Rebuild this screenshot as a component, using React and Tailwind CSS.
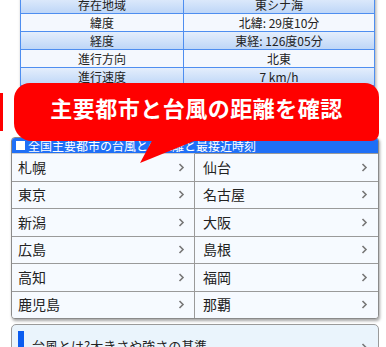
import React from 'react';

const rows = [
  ['存在地域', '東シナ海'],
  ['緯度', '北緯: 29度10分'],
  ['経度', '東経: 126度05分'],
  ['進行方向', '北東'],
  ['進行速度', '7 km/h'],
  ['中心気圧', '985 hPa'],
  ['最大風速', '25 m/s'],
];

const cities = [
  ['札幌', '仙台'],
  ['東京', '名古屋'],
  ['新潟', '大阪'],
  ['広島', '島根'],
  ['高知', '福岡'],
  ['鹿児島', '那覇'],
];

const Chevron = () => (
  <svg width="7" height="9" viewBox="0 0 7 9" className="shrink-0">
    <path d="M1.5 1 L5 4.5 L1.5 8" fill="none" stroke="#777" strokeWidth="1.6" />
  </svg>
);

const App = () => {
  return (
    <div className="relative w-[386px] h-[347px] overflow-hidden bg-white" style={{ fontFamily: '"Noto Sans CJK JP", "Noto Sans", sans-serif' }}>
      {/* red edge of the element on the left */}
      <div className="absolute left-0 top-[93px] w-[3px] h-[38px] bg-[#ff0000]"></div>

      {/* typhoon info table */}
      <div className="ml-[20px] mt-[-5px] w-[355px] shadow-[1px_1px_3px_rgba(0,0,0,0.35)]">
        <table className="w-full border-collapse text-[12px] leading-none text-[#222]">
          <tbody>
            {rows.map(([a, b], i) => (
              <tr key={a} className={i % 2 === 0 ? 'bg-gradient-to-b from-[#e4eefc] to-[#bcd5f7]' : 'bg-[#f4f8fe]'}>
                <td className="h-[18px] w-[163px] border border-[#4e8ef0] text-center">{a}</td>
                <td className="h-[18px] border border-[#4e8ef0] text-center">{b}</td>
              </tr>
            ))}
          </tbody>
        </table>
      </div>

      {/* cities panel */}
      <div className="mt-[15px] ml-[11px] w-[368px] rounded-[4px] border border-[#8a8a8a] bg-white shadow-[1px_2px_3px_rgba(0,0,0,0.35)] overflow-hidden">
        <div className="h-[15px] bg-[#1f6ff6] flex items-center gap-[3px] pl-[4px] text-[12px] leading-none text-white">
          <span className="w-[9px] h-[9px] bg-white"></span>
          全国主要都市の台風との距離と最接近時刻
        </div>
        <div className="grid grid-cols-2">
          {cities.map(([l, r], i) => (
            <React.Fragment key={l}>
              <div className={`h-[27.5px] flex items-center justify-between pl-[6px] pr-[9px] bg-[#f6faff] border-r border-[#9a9a9a] ${i > 0 ? 'border-t' : 'border-t border-t-[#cfcfcf]'} border-t-[#9a9a9a]`}>
                <span className="text-[14px] text-[#222]">{l}</span>
                <Chevron />
              </div>
              <div className={`h-[27.5px] flex items-center justify-between pl-[8px] pr-[10px] bg-[#f6faff] ${i > 0 ? 'border-t' : 'border-t'} border-t-[#9a9a9a]`}>
                <span className="text-[14px] text-[#222]">{r}</span>
                <Chevron />
              </div>
            </React.Fragment>
          ))}
        </div>
      </div>

      {/* typhoon basics link */}
      <div className="mt-[5px] ml-[11px] w-[368px] h-[40px] rounded-[5px] border border-[#9a9a9a] bg-[#eaf4fc] flex items-start pt-[6px] pl-[6px] pr-[10px] gap-[8px]">
        <span className="w-[6px] h-[22px] bg-[#0a5cf0]"></span>
        <span className="flex-1 text-[13px] leading-[22px] text-[#222] pt-[4px]">台風とは?大きさや強さの基準</span>
        <span className="pt-[12px]"><Chevron /></span>
      </div>

      {/* callout bubble */}
      <div className="absolute left-[14px] top-[83px] w-[365px] h-[58px]">
        <svg className="absolute left-0 top-0 overflow-visible" width="365" height="58">
          <polygon points="140,54 190,54 126,80" fill="#ff0000" />
        </svg>
        <div className="absolute inset-0 rounded-tl-[16px] rounded-tr-[14px] rounded-bl-[18px] rounded-br-[8px] bg-[#ff0000] flex items-center justify-center pb-[10px]">
          <span className="text-[22px] font-bold leading-none tracking-[0.5px] text-white">主要都市と台風の距離を確認</span>
        </div>
      </div>
    </div>
  );
};

export default App;
